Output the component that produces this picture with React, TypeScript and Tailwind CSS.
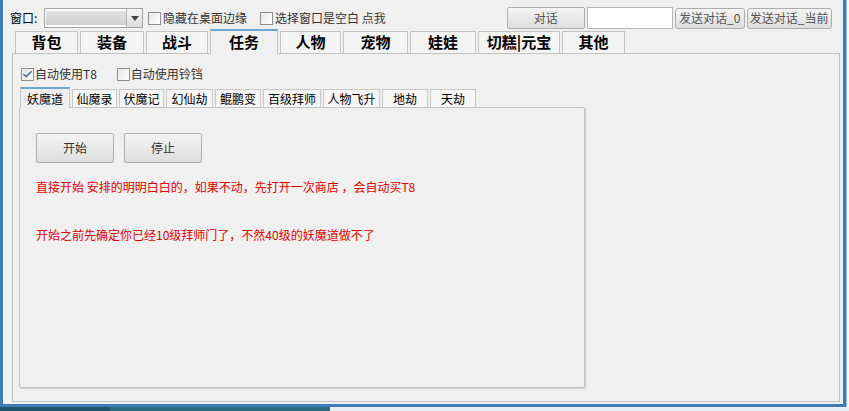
import { Check } from 'lucide-react'

const font = { fontFamily: '"Noto Sans CJK SC", "Noto Sans", sans-serif' }

const mainTabs = [
  { label: '背包', w: 'w-[63px]' },
  { label: '装备', w: 'w-[64px]' },
  { label: '战斗', w: 'w-[62px]' },
  { label: '任务', w: 'w-[68px]', active: true },
  { label: '人物', w: 'w-[61px]' },
  { label: '宠物', w: 'w-[65px]' },
  { label: '娃娃', w: 'w-[66px]' },
  { label: '切糕|元宝', w: 'w-[82px]' },
  { label: '其他', w: 'w-[63px]' },
]

const subTabs = [
  { label: '妖魔道', w: 'w-[50px]', active: true },
  { label: '仙魔录', w: 'w-[45px]' },
  { label: '伏魔记', w: 'w-[45px]' },
  { label: '幻仙劫', w: 'w-[47px]' },
  { label: '鲲鹏变', w: 'w-[46px]' },
  { label: '百级拜师', w: 'w-[58px]' },
  { label: '人物飞升', w: 'w-[57px]' },
  { label: '地劫', w: 'w-[46px]' },
  { label: '天劫', w: 'w-[46px]' },
]

function Box({ checked }: { checked?: boolean }) {
  return (
    <span className="w-[13px] h-[13px] border border-[#8f8f8f] bg-gradient-to-br from-[#e6e6e6] to-white flex items-center justify-center shrink-0">
      {checked && <Check className="w-[11px] h-[11px] text-[#3b5f9a]" strokeWidth={3} />}
    </span>
  )
}

function Btn({ children, className }: { children: React.ReactNode; className: string }) {
  return (
    <div
      className={`border border-[#adadad] rounded-[2px] bg-gradient-to-b from-[#f4f4f4] to-[#dedede] text-[#333] flex items-center justify-center ${className}`}
    >
      {children}
    </div>
  )
}

export default function App() {
  return (
    <div className="w-[849px] h-[411px] overflow-hidden bg-white flex flex-col text-[12px] text-black" style={font}>
      <div className="flex h-[407px]">
        <div className="w-[846px] h-full border-l-[3px] border-r-[3px] border-b-[3px] border-[#3d7ab8] bg-[#f0f0f0] flex flex-col">
          {/* top bar */}
          <div className="mt-[7px] h-[22px] flex items-center pl-[7px]">
            <span className="w-[34px]">窗口:</span>
            <div className="w-[99px] h-[20px] border border-[#a5a5a5] bg-white flex items-center pl-[1px]">
              <div className="w-[80px] h-[14px] bg-gradient-to-b from-[#e2e2e2] to-[#cfcfcf]" />
              <div className="ml-auto w-[16px] h-full border-l border-[#b5b5b5] bg-gradient-to-b from-[#f5f5f5] to-[#dcdcdc] flex items-center justify-center">
                <svg width="8" height="5" viewBox="0 0 8 5">
                  <path d="M0 0h8L4 5z" fill="#444" />
                </svg>
              </div>
            </div>
            <span className="ml-[5px] flex items-center gap-[2px] text-[#333]">
              <Box />
              <span>隐藏在桌面边缘</span>
            </span>
            <span className="ml-[13px] flex items-center gap-[2px] text-[#333]">
              <Box />
              <span>选择窗口是空白 点我</span>
            </span>
            <Btn className="ml-[121px] w-[78px] h-[22px] text-[#555]">对话</Btn>
            <div className="ml-[2px] w-[86px] h-[22px] border border-[#b5b5b5] bg-white" />
            <Btn className="ml-[2px] w-[70px] h-[21px] text-[#555] rounded-[3px]">发送对话_0</Btn>
            <Btn className="ml-[2px] w-[85px] h-[21px] text-[#555] rounded-[3px]">发送对话_当前</Btn>
          </div>

          {/* main tabs + panel */}
          <div className="ml-[9px] mr-[3px] mb-[2px] flex-1 flex flex-col">
            <div className="h-[24px] flex items-end gap-[2px] pl-[3px]">
              {mainTabs.map((t) =>
                t.active ? (
                  <div
                    key={t.label}
                    className={`${t.w} h-[25px] -mb-px relative z-10 bg-[#f0f0f0] border-x border-t-2 border-x-[#c3c3c3] border-t-[#6aa8d6] flex items-center justify-center text-[15px] font-bold`}
                  >
                    {t.label}
                  </div>
                ) : (
                  <div
                    key={t.label}
                    className={`${t.w} h-[22px] bg-[#f4f4f4] border-x border-t border-[#c3c3c3] flex items-center justify-center text-[15px] font-bold`}
                  >
                    {t.label}
                  </div>
                ),
              )}
            </div>
            <div className="flex-1 border border-[#c3c3c3] bg-[#f0f0f0] pl-[6px]">
              <div className="mt-[13px] ml-[2px] h-[14px] flex items-center text-[#333]">
                <span className="flex items-center gap-[1px]">
                  <Box checked />
                  <span>自动使用T8</span>
                </span>
                <span className="ml-[20px] flex items-center gap-[1px]">
                  <Box />
                  <span>自动使用铃铛</span>
                </span>
              </div>

              <div className="mt-[6px] w-[566px]">
                <div className="h-[20px] flex items-end gap-[2px] pl-[1px]">
                  {subTabs.map((t) =>
                    t.active ? (
                      <div
                        key={t.label}
                        className={`${t.w} h-[21px] -mb-px relative z-10 bg-[#f0f0f0] border-x border-t-2 border-x-[#c8c8c8] border-t-[#6aa8d6] flex items-center justify-center`}
                      >
                        {t.label}
                      </div>
                    ) : (
                      <div
                        key={t.label}
                        className={`${t.w} h-[18px] bg-[#f6f6f6] border-x border-t border-[#c8c8c8] flex items-center justify-center`}
                      >
                        {t.label}
                      </div>
                    ),
                  )}
                </div>
                <div className="h-[281px] border border-[#c4c4c4] rounded-[2px] shadow-[1px_1px_1px_rgba(0,0,0,0.15)] bg-[#f0f0f0] pl-[16px] pt-[25px]">
                  <div className="flex gap-[10px]">
                    <Btn className="w-[78px] h-[30px]">开始</Btn>
                    <Btn className="w-[78px] h-[30px]">停止</Btn>
                  </div>
                  <p className="mt-[16px] leading-[16px] text-[#e00000]">
                    直接开始 安排的明明白白的，如果不动，先打开一次商店 ，会自动买T8
                  </p>
                  <p className="mt-[32px] leading-[16px] text-[#e00000]">
                    开始之前先确定你已经10级拜师门了，不然40级的妖魔道做不了
                  </p>
                </div>
              </div>
            </div>
          </div>
        </div>
        <div className="flex-1 bg-white border-l border-[#9cc0e0]" />
      </div>
      <div className="flex-1 flex">
        <div className="w-[110px] bg-[#1f5468]" />
        <div className="w-[220px] bg-[#2a6a80]" />
        <div className="flex-1 bg-[#e9eef2]" />
      </div>
    </div>
  )
}
